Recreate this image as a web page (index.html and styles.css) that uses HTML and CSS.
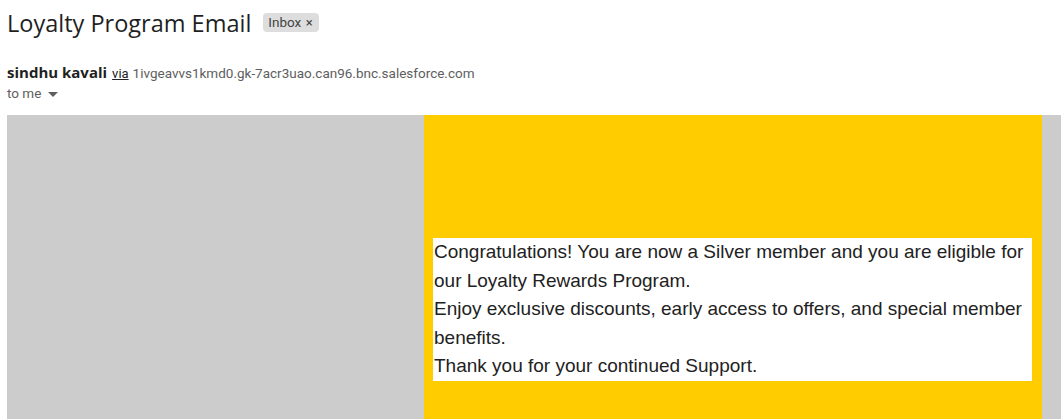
FILE: index.html
```html
<!DOCTYPE html>
<html>
<head>
<meta charset="utf-8">
<link rel="stylesheet" href="styles.css">
</head>
<body>
<div class="page">
  <div class="subject-row">
    <h1 class="subject">Loyalty Program Email</h1>
    <span class="label">Inbox <span class="label-x">×</span></span>
  </div>
  <div class="sender-row">
    <span class="sender">sindhu kavali</span>
    <span class="via">via</span>
    <span class="addr">1ivgeavvs1kmd0.gk-7acr3uao.can96.bnc.salesforce.com</span>
  </div>
  <div class="to-row">to me <svg class="caret" width="10" height="5" viewBox="0 0 10 5"><path d="M0 0h10L5 5z" fill="#5e5e5e"/></svg></div>
  <div class="mail">
    <div class="col-left"></div>
    <div class="col-main">
      <div class="msg">
        Congratulations! You are now a Silver member and you are eligible for our Loyalty Rewards Program.<br>
        Enjoy exclusive discounts, early access to offers, and special member benefits.<br>
        Thank you for your continued Support.
      </div>
    </div>
    <div class="col-right"></div>
  </div>
</div>
</body>
</html>
```
FILE: styles.css
```css
html, body {
  margin: 0;
  padding: 0;
  background: #fff;
  overflow: hidden;
}
.page {
  width: 1061px;
  height: 419px;
  overflow: hidden;
  font-family: Roboto, "Open Sans", sans-serif;
}
.subject-row {
  display: flex;
  align-items: center;
  padding: 9px 0 0 7px;
  height: 28px;
}
.subject {
  margin: 0;
  font-family: "Open Sans", Roboto, sans-serif;
  font-weight: 400;
  font-size: 23.5px;
  color: #1f1f1f;
  line-height: 28px;
}
.label {
  margin-left: 12px;
  background: #ddd;
  color: #444;
  font-family: Roboto, sans-serif;
  font-size: 13.5px;
  border-radius: 4px;
  padding: 0 6px 0 5px;
  height: 19px;
  line-height: 19px;
  margin-top: -2px;
}
.label-x {
  font-size: 13px;
  margin-left: 1px;
}
.sender-row {
  padding: 25px 0 0 7px;
  height: 20px;
  line-height: 20px;
  white-space: nowrap;
}
.sender {
  font-family: "Open Sans", Roboto, sans-serif;
  font-weight: 700;
  font-size: 15px;
  color: #1f1f1f;
}
.via {
  font-size: 13px;
  color: #222;
  text-decoration: underline;
  margin-left: 1px;
}
.addr {
  font-size: 13.5px;
  color: #5e5e5e;
}
.to-row {
  padding: 2px 0 0 7px;
  font-size: 13.5px;
  color: #5e5e5e;
  height: 18px;
  line-height: 18px;
}
.caret {
  margin-left: 3px;
  vertical-align: middle;
}
.mail {
  margin: 13px 0 0 7px;
  display: flex;
  height: 304px;
  background: #ccc;
}
.col-left {
  width: 417px;
  flex: none;
}
.col-main {
  width: 618px;
  flex: none;
  background: #ffcc00;
  padding: 123px 10px 0 9px;
  box-sizing: border-box;
}
.col-right {
  flex: 1;
}
.msg {
  background: #fff;
  font-family: "Liberation Sans", Arial, sans-serif;
  font-size: 19px;
  line-height: 28.6px;
  color: #222;
  padding: 0 0 0 1px;
}
```
